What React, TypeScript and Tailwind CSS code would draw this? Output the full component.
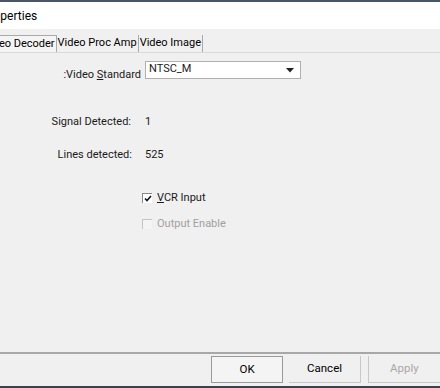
import React from "react";

const font = { fontFamily: 'Roboto, "Liberation Sans", Arial, sans-serif' };

function Tab({ label, active }: { label: string; active?: boolean }) {
    return (
        <div
            className={
                active
                    ? "h-[17px] px-[1px] flex items-center border border-b-0 border-[#a9a9a9] bg-[#f4f4f4] text-[11px] text-black"
                    : "h-[17px] px-[1px] flex items-center border-r border-[#a9a9a9] text-[11px] text-black"
            }
        >
            {label}
        </div>
    );
}

export default function App() {
    return (
        <div className="w-[440px] h-[388px] flex flex-col overflow-hidden bg-[#f0f0f0]" style={font}>
            {/* window top edge */}
            <div className="h-[2px] bg-[#4a5566]" />

            {/* title bar */}
            <div className="h-[27px] bg-white flex items-center text-[12px] text-black ml-[-18px]">
                Properties
            </div>

            {/* tabs */}
            <div className="mt-[6px] flex items-end ml-[-19px] border-b border-[#d9d9d9]">
                <Tab label="Video Decoder" active />
                <Tab label="Video Proc Amp" />
                <Tab label="Video Image" />
            </div>

            {/* page body */}
            <div className="flex-1 flex flex-col text-[11px] text-[#1a1a1a]">
                <div className="mt-[8px] flex items-start">
                    <div className="w-[141px] text-right pt-[6px]">
                        :Video <u>S</u>tandard
                    </div>
                    <div className="ml-[4px] w-[156px] h-[18px] bg-white border border-[#b0b0b0] flex items-center justify-between pl-[3px] pr-[6px]">
                        <span className="-mt-[2px]">NTSC_M</span>
                        <svg width="8" height="5" viewBox="0 0 8 5">
                            <path d="M0 0 L8 0 L4 4.5 Z" fill="#222" />
                        </svg>
                    </div>
                </div>

                <div className="mt-[30px] flex items-center">
                    <div className="w-[131px] text-right">Signal Detected:</div>
                    <div className="ml-[14px]">1</div>
                </div>

                <div className="mt-[17px] flex items-center">
                    <div className="w-[132px] text-right">Lines detected:</div>
                    <div className="ml-[13px]">525</div>
                </div>

                <div className="mt-[26px] ml-[142px] flex items-center">
                    <div className="w-[10px] h-[10px] border-l border-t border-[#8a8a8a] bg-white flex items-center justify-center">
                        <svg width="8" height="7" viewBox="0 0 8 7">
                            <path d="M1 3.5 L3 5.5 L7 1" stroke="#111" strokeWidth="1.6" fill="none" />
                        </svg>
                    </div>
                    <span className="ml-[5px]">
                        <u>V</u>CR Input
                    </span>
                </div>

                <div className="mt-[10px] ml-[142px] flex items-center text-[#a0a0a0]">
                    <div className="w-[10px] h-[10px] border-l border-t border-[#c4c4c4] bg-[#f4f4f4]" />
                    <span className="ml-[5px]">Output Enable</span>
                </div>
            </div>

            {/* footer */}
            <div className="h-[34px] border-t-2 border-[#a8a8a8] flex items-start pt-[2px] text-[11.5px]">
                <div className="ml-[211px] w-[80px] h-[27px] border border-[#9a9a9a] bg-[#f4f4f4] flex items-center justify-center text-black">
                    OK
                </div>
                <div className="ml-[6px] w-[79px] h-[27px] border-r border-b border-[#c8c8c8] flex items-center justify-center text-black">
                    Cancel
                </div>
                <div className="ml-[7px] w-[80px] h-[27px] border-l border-b border-[#c8c8c8] flex items-center justify-center text-[#a8a8a8]">
                    Apply
                </div>
            </div>

            <div className="h-[2px] bg-[#3a4250]" />
        </div>
    );
}
